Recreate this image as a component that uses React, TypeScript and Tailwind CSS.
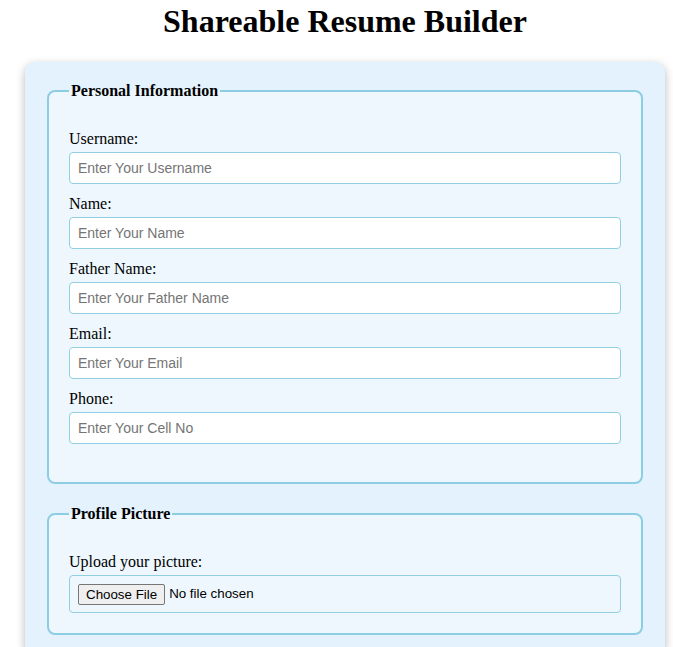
import React from "react";

const fields = [
  { label: "Username:", placeholder: "Enter Your Username" },
  { label: "Name:", placeholder: "Enter Your Name" },
  { label: "Father Name:", placeholder: "Enter Your Father Name" },
  { label: "Email:", placeholder: "Enter Your Email" },
  { label: "Phone:", placeholder: "Enter Your Cell No" },
];

export default function App() {
  return (
    <div className="h-[647px] w-full overflow-hidden bg-white text-black [font-family:'Liberation_Serif','Times_New_Roman',serif]">
      <div className="w-[690px] pt-[3px]">
        <h1 className="text-center text-[32px] leading-[37px] font-bold">Shareable Resume Builder</h1>
        <div className="mx-auto mt-[22px] w-[640px] rounded-[10px] bg-[#e3f2fd] px-[22px] pt-[20px] pb-[20px] shadow-[0_3px_10px_rgba(0,0,0,0.28)]">
          <fieldset className="rounded-lg border-2 border-[#8dcde4] bg-[#eef7fe] px-5 pt-[29px] pb-[38px]">
            <legend className="px-0.5 text-[16px] leading-[18px] font-bold">Personal Information</legend>
            {fields.map((f, i) => (
              <div key={f.label} className={i < fields.length - 1 ? "mb-[10px]" : ""}>
                <label className="block text-[16px] leading-[20px] mb-[3px]">{f.label}</label>
                <input
                  type="text"
                  placeholder={f.placeholder}
                  className="block h-[32px] w-full rounded-[4px] border border-[#93cfe3] bg-white px-2 text-[14px] [font-family:'Liberation_Sans',Arial,sans-serif] placeholder:text-[#757575] outline-none"
                />
              </div>
            ))}
          </fieldset>
          <fieldset className="mt-[21px] rounded-lg border-2 border-[#8dcde4] bg-[#eef7fe] px-5 pt-[29px] pb-[20px]">
            <legend className="px-0.5 text-[16px] leading-[18px] font-bold">Profile Picture</legend>
            <label className="block text-[16px] leading-[20px] mb-[3px]">Upload your picture:</label>
            <div className="flex h-[38px] items-center rounded-[4px] border border-[#93cfe3] pl-2 [font-family:'Liberation_Sans',Arial,sans-serif] text-[13.333px]">
              <button type="button" className="h-[21px] rounded-[2px] border border-[#767676] bg-[#efefef] px-[7px] leading-[19px] text-black">
                Choose File
              </button>
              <span className="ml-[4px]">No file chosen</span>
            </div>
          </fieldset>
        </div>
      </div>
    </div>
  );
}
